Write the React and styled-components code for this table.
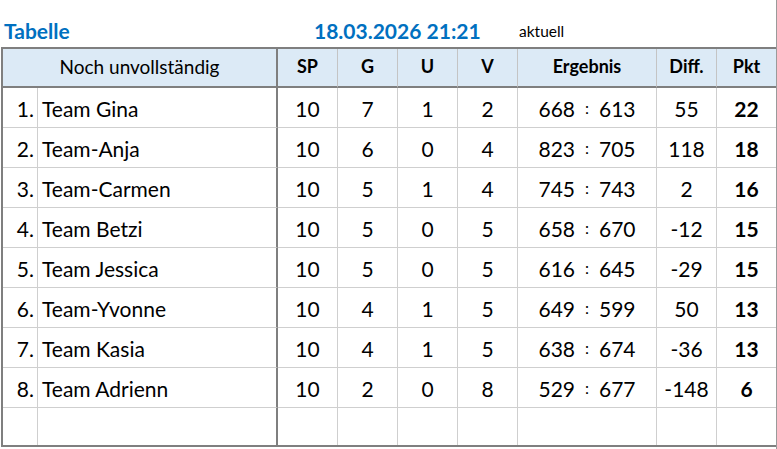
import React from "react";
import styled, { createGlobalStyle } from "styled-components";

const GlobalStyle = createGlobalStyle`
  html, body {
    margin: 0;
    padding: 0;
    background: #fff;
  }
  body {
    font-family: Lato, "Open Sans", sans-serif;
    color: #000;
  }
`;

const Page = styled.div`
  width: 777px;
  height: 449px;
  box-sizing: border-box;
  border-right: 1px solid #9a9a9a;
  overflow: hidden;
`;

const TitleBar = styled.div`
  height: 47px;
  display: grid;
  grid-template-columns: 314px 205px auto;
  align-items: end;
  box-sizing: border-box;
  padding-bottom: 4px;
`;

const Title = styled.div`
  padding-left: 4px;
  font-size: 21px;
  font-weight: 700;
  color: #0070c0;
  line-height: 24px;
`;

const DateText = styled(Title)`
  padding-left: 0;
`;

const Status = styled.div`
  font-size: 15.5px;
  line-height: 20px;
  padding-bottom: 2px;
`;

const Table = styled.div`
  margin-left: 1px;
  border-left: 2px solid #7f7f7f;
  border-top: 2px solid #7f7f7f;
  border-bottom: 2px solid #7f7f7f;
  display: grid;
  grid-template-columns: 35px 240px 60px 60px 60px 60px 139px 60px 59px;
  grid-template-rows: 39px repeat(8, 40px) 37px;
`;

const Head = styled.div`
  grid-column: ${(p) => p.$span || "auto"};
  background: #dceaf6;
  border-bottom: 2px solid #7f7f7f;
  border-right: ${(p) => (p.$thick ? "2px solid #7f7f7f" : p.$last ? "none" : "1px solid #c4c4c4")};
  display: flex;
  align-items: center;
  justify-content: center;
  font-size: ${(p) => (p.$bold ? "18px" : "19px")};
  font-weight: ${(p) => (p.$bold ? 700 : 400)};
  padding-bottom: 3px;
  box-sizing: border-box;
`;

const Cell = styled.div`
  border-bottom: ${(p) => (p.$lastRow ? "none" : "1px solid #cfcfcf")};
  border-right: ${(p) => (p.$thick ? "2px solid #7f7f7f" : p.$last ? "none" : "1px solid #cfcfcf")};
  display: flex;
  align-items: center;
  justify-content: ${(p) => p.$align || "center"};
  padding: 1px ${(p) => (p.$align === "flex-end" ? "3px" : "0")} 0 ${(p) => (p.$align === "flex-start" ? "4px" : "0")};
  font-size: 21px;
  font-weight: ${(p) => (p.$bold ? 700 : 400)};
  box-sizing: border-box;
`;

const Score = styled.div`
  width: 100%;
  display: grid;
  grid-template-columns: 1fr auto 1fr;
  column-gap: 10px;
  align-items: center;
`;

const ScoreLeft = styled.span`
  text-align: right;
`;

const Colon = styled.span`
  font-size: 16px;
  position: relative;
  top: -1px;
`;

const ScoreRight = styled.span`
  text-align: left;
`;

const teams = [
  ["Team Gina", 10, 7, 1, 2, 668, 613, 55, 22],
  ["Team-Anja", 10, 6, 0, 4, 823, 705, 118, 18],
  ["Team-Carmen", 10, 5, 1, 4, 745, 743, 2, 16],
  ["Team Betzi", 10, 5, 0, 5, 658, 670, -12, 15],
  ["Team Jessica", 10, 5, 0, 5, 616, 645, -29, 15],
  ["Team-Yvonne", 10, 4, 1, 5, 649, 599, 50, 13],
  ["Team Kasia", 10, 4, 1, 5, 638, 674, -36, 13],
  ["Team Adrienn", 10, 2, 0, 8, 529, 677, -148, 6],
];

export default function App() {
  return (
    <Page>
      <GlobalStyle />
      <TitleBar>
        <Title>Tabelle</Title>
        <DateText>18.03.2026 21:21</DateText>
        <Status>aktuell</Status>
      </TitleBar>
      <Table>
        <Head $span="span 2" $thick>Noch unvollständig</Head>
        <Head $bold>SP</Head>
        <Head $bold>G</Head>
        <Head $bold>U</Head>
        <Head $bold>V</Head>
        <Head $bold>Ergebnis</Head>
        <Head $bold>Diff.</Head>
        <Head $bold $last>Pkt</Head>

        {teams.map(([name, sp, g, u, v, pf, pa, diff, pkt], i) => (
          <React.Fragment key={name}>
            <Cell $align="flex-end">{i + 1}.</Cell>
            <Cell $align="flex-start" $thick>{name}</Cell>
            <Cell>{sp}</Cell>
            <Cell>{g}</Cell>
            <Cell>{u}</Cell>
            <Cell>{v}</Cell>
            <Cell>
              <Score>
                <ScoreLeft>{pf}</ScoreLeft>
                <Colon>:</Colon>
                <ScoreRight>{pa}</ScoreRight>
              </Score>
            </Cell>
            <Cell>{diff}</Cell>
            <Cell $bold $last>{pkt}</Cell>
          </React.Fragment>
        ))}

        <Cell $lastRow />
        <Cell $lastRow $thick />
        <Cell $lastRow />
        <Cell $lastRow />
        <Cell $lastRow />
        <Cell $lastRow />
        <Cell $lastRow />
        <Cell $lastRow />
        <Cell $lastRow $last />
      </Table>
    </Page>
  );
}
